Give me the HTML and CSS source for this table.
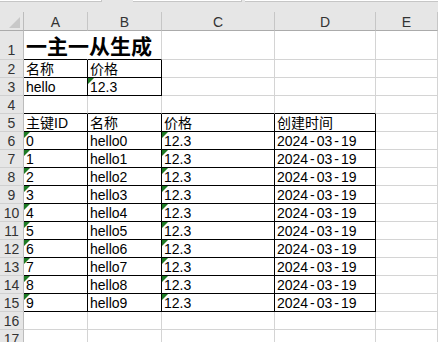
FILE: index.html
```html
<!DOCTYPE HTML>
<html>
<head>
<meta charset="utf-8" />
<title>一主一从生成</title>
<link rel="stylesheet" href="styles.css">
</head>

<body>
<div class="toolbar">
	<span class="box box-name"></span>
	<span class="box box-formula"></span>
	<span class="box box-rest"></span>
</div>
<div class="sheet">
	<!-- column headers -->
	<div class="corner"><i></i></div>
	<div class="colhead">A</div>
	<div class="colhead">B</div>
	<div class="colhead">C</div>
	<div class="colhead">D</div>
	<div class="colhead">E</div>

	<!-- 1 -->
	<div class="rowhead tall">1</div>
	<div class="cell title nr bb">一主一从生成</div>
	<div class="cell bb"></div>
	<div class="cell"></div>
	<div class="cell"></div>
	<div class="cell"></div>

	<!-- 2-3: 主表 -->
	<div class="rowhead">2</div>
	<div class="cell br bb">名称</div>
	<div class="cell br bb">价格</div>
	<div class="cell"></div>
	<div class="cell"></div>
	<div class="cell"></div>

	<div class="rowhead">3</div>
	<div class="cell br bb">hello</div>
	<div class="cell br bb flag">12.3</div>
	<div class="cell"></div>
	<div class="cell"></div>
	<div class="cell"></div>

	<div class="rowhead">4</div>
	<div class="cell bb"></div>
	<div class="cell bb"></div>
	<div class="cell bb"></div>
	<div class="cell bb"></div>
	<div class="cell"></div>

	<!-- 5-15: 从表 -->
	<div class="rowhead">5</div>
	<div class="cell br bb">主键ID</div>
	<div class="cell br bb">名称</div>
	<div class="cell br bb">价格</div>
	<div class="cell br bb">创建时间</div>
	<div class="cell"></div>

	<div class="rowhead">6</div>
	<div class="cell br bb flag">0</div>
	<div class="cell br bb">hello0</div>
	<div class="cell br bb flag">12.3</div>
	<div class="cell br bb">2024<span class="dash">-</span>03<span class="dash">-</span>19</div>
	<div class="cell"></div>

	<div class="rowhead">7</div>
	<div class="cell br bb flag">1</div>
	<div class="cell br bb">hello1</div>
	<div class="cell br bb flag">12.3</div>
	<div class="cell br bb">2024<span class="dash">-</span>03<span class="dash">-</span>19</div>
	<div class="cell"></div>

	<div class="rowhead">8</div>
	<div class="cell br bb flag">2</div>
	<div class="cell br bb">hello2</div>
	<div class="cell br bb flag">12.3</div>
	<div class="cell br bb">2024<span class="dash">-</span>03<span class="dash">-</span>19</div>
	<div class="cell"></div>

	<div class="rowhead">9</div>
	<div class="cell br bb flag">3</div>
	<div class="cell br bb">hello3</div>
	<div class="cell br bb flag">12.3</div>
	<div class="cell br bb">2024<span class="dash">-</span>03<span class="dash">-</span>19</div>
	<div class="cell"></div>

	<div class="rowhead">10</div>
	<div class="cell br bb flag">4</div>
	<div class="cell br bb">hello4</div>
	<div class="cell br bb flag">12.3</div>
	<div class="cell br bb">2024<span class="dash">-</span>03<span class="dash">-</span>19</div>
	<div class="cell"></div>

	<div class="rowhead">11</div>
	<div class="cell br bb flag">5</div>
	<div class="cell br bb">hello5</div>
	<div class="cell br bb flag">12.3</div>
	<div class="cell br bb">2024<span class="dash">-</span>03<span class="dash">-</span>19</div>
	<div class="cell"></div>

	<div class="rowhead">12</div>
	<div class="cell br bb flag">6</div>
	<div class="cell br bb">hello6</div>
	<div class="cell br bb flag">12.3</div>
	<div class="cell br bb">2024<span class="dash">-</span>03<span class="dash">-</span>19</div>
	<div class="cell"></div>

	<div class="rowhead">13</div>
	<div class="cell br bb flag">7</div>
	<div class="cell br bb">hello7</div>
	<div class="cell br bb flag">12.3</div>
	<div class="cell br bb">2024<span class="dash">-</span>03<span class="dash">-</span>19</div>
	<div class="cell"></div>

	<div class="rowhead">14</div>
	<div class="cell br bb flag">8</div>
	<div class="cell br bb">hello8</div>
	<div class="cell br bb flag">12.3</div>
	<div class="cell br bb">2024<span class="dash">-</span>03<span class="dash">-</span>19</div>
	<div class="cell"></div>

	<div class="rowhead">15</div>
	<div class="cell br bb flag">9</div>
	<div class="cell br bb">hello9</div>
	<div class="cell br bb flag">12.3</div>
	<div class="cell br bb">2024<span class="dash">-</span>03<span class="dash">-</span>19</div>
	<div class="cell"></div>

	<div class="rowhead">16</div>
	<div class="cell"></div>
	<div class="cell"></div>
	<div class="cell"></div>
	<div class="cell"></div>
	<div class="cell"></div>

	<div class="rowhead">17</div>
	<div class="cell"></div>
	<div class="cell"></div>
	<div class="cell"></div>
	<div class="cell"></div>
	<div class="cell"></div>
</div>
</body>
</html>
```

FILE: styles.css
```css
body { margin: 0; background: #fff; font: 14px/16px "Liberation Sans", "Noto Sans CJK SC", sans-serif; color: #000; overflow: hidden; }

/* strip under the name box / formula bar */
.toolbar { display: flex; height: 12px; background: #e6e6e6; }
	.toolbar .box { height: 1px; background: #fff; border-bottom: 1px solid #c6c6c6; }
	.toolbar .box-name { width: 101px; border-right: 1px solid #c6c6c6; }
	.toolbar .box-formula { width: 108px; margin-left: 31px; border-right: 1px solid #c6c6c6; }
	.toolbar .box-rest { flex: 1; margin-left: 3px; }

.sheet {
	display: grid;
	grid-template-columns: 24px 64px 74px 113px 101px 1fr;
	grid-template-rows: 19px 29px;
	grid-auto-rows: 18px;
}
	.sheet > div { box-sizing: border-box; display: flex; align-items: flex-end; white-space: nowrap; min-width: 0; }

	.corner { background: #e6e6e6; border-right: 1px solid #bcbcbc; border-bottom: 1px solid #ababab; justify-content: flex-end; padding: 0 3px 2px 0; }
		.corner i { width: 0; height: 0; border-left: 11px solid transparent; border-bottom: 11px solid #c8c8c8; }
	.colhead { background: #e6e6e6; border-right: 1px solid #c6c6c6; border-bottom: 1px solid #ababab; justify-content: center; color: #333; }
	.rowhead { background: #e6e6e6; border-right: 1px solid #bcbcbc; border-bottom: 1px solid #d0d0d0; justify-content: center; color: #333; }
	.rowhead.tall { padding-bottom: 1px; }

	.cell { position: relative; padding-left: 2px; border-right: 1px solid #d4d4d4; border-bottom: 1px solid #d4d4d4; overflow: visible; }
	.cell.nr { border-right-color: transparent; }
	.cell.br { border-right-color: #000; }
	.cell.bb { border-bottom-color: #000; }

	.title { font-size: 21px; line-height: 24px; font-weight: bold; }

	/* number-stored-as-text marker */
	.flag::before {
		content: "";
		position: absolute;
		left: 0;
		top: 0;
		border-top: 6px solid #1d7a24;
		border-right: 6px solid transparent;
	}

	.dash { display: inline-block; width: 8.6px; text-align: center; }
```
